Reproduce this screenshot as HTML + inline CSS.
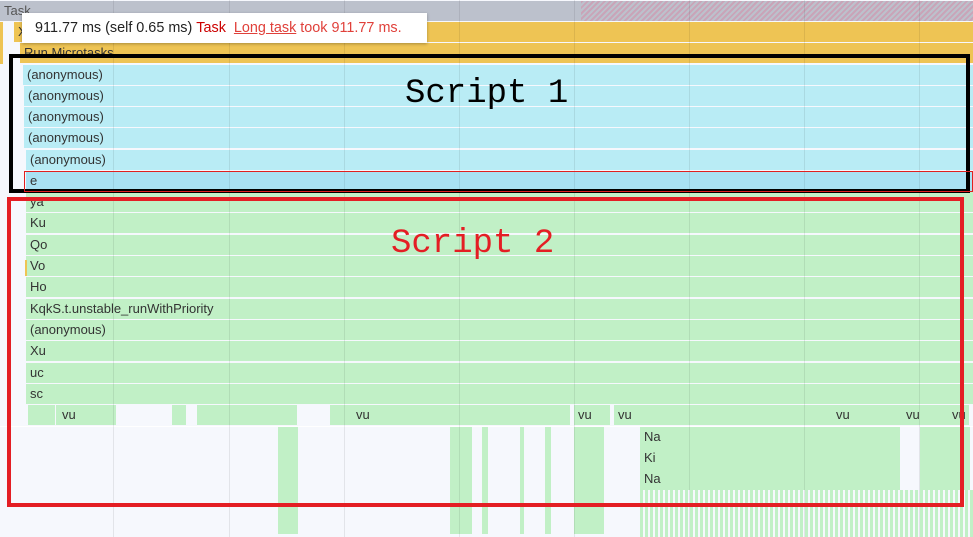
<!DOCTYPE html><html><head><style>
body{margin:0;width:973px;height:537px;overflow:hidden;background:#f6f8fd;font-family:"Liberation Sans",sans-serif;position:relative}
.r{position:absolute;height:20px;font-size:13px;color:#333;line-height:20px;padding-left:4px;box-sizing:border-box}
.g{position:absolute;top:0;bottom:0;width:1px;background:rgba(0,0,0,.08)}
.b{position:absolute;background:#c1f0c6}
</style></head><body>
<div class="r" style="top:1px;left:0;width:973px;background:#bcc1cc;color:#555">Task</div>
<div style="position:absolute;top:1px;left:581px;width:392px;height:20px;background:repeating-linear-gradient(135deg,#c9a4b8 0 2px,#bcc1cc 2px 4px)"></div>
<div class="r" style="top:22px;left:14px;width:959px;background:#eec454">X</div>
<div class="r" style="top:43px;left:20px;width:953px;background:#eec454">Run Microtasks</div>
<div style="position:absolute;left:0;top:22px;width:3px;height:42px;background:#eec454"></div>
<div class="r" style="top:65px;left:23px;width:950px;background:#b9ecf5">(anonymous)</div>
<div class="r" style="top:86px;left:24px;width:949px;background:#b9ecf5">(anonymous)</div>
<div class="r" style="top:107px;left:24px;width:949px;background:#b9ecf5">(anonymous)</div>
<div class="r" style="top:128px;left:24px;width:949px;background:#b9ecf5">(anonymous)</div>
<div class="r" style="top:150px;left:26px;width:947px;background:#b9ecf5">(anonymous)</div>
<div class="r" style="top:171px;left:26px;width:947px;background:#a9e1f3">e</div>
<div class="r" style="top:192px;left:26px;width:947px;background:#c1f0c6">ya</div>
<div class="r" style="top:213px;left:26px;width:947px;background:#c1f0c6">Ku</div>
<div class="r" style="top:235px;left:26px;width:947px;background:#c1f0c6">Qo</div>
<div class="r" style="top:256px;left:26px;width:947px;background:#c1f0c6">Vo</div>
<div class="r" style="top:277px;left:26px;width:947px;background:#c1f0c6">Ho</div>
<div class="r" style="top:299px;left:26px;width:947px;background:#c1f0c6">KqkS.t.unstable_runWithPriority</div>
<div class="r" style="top:320px;left:26px;width:947px;background:#c1f0c6">(anonymous)</div>
<div class="r" style="top:341px;left:26px;width:947px;background:#c1f0c6">Xu</div>
<div class="r" style="top:363px;left:26px;width:947px;background:#c1f0c6">uc</div>
<div class="r" style="top:384px;left:26px;width:947px;background:#c1f0c6">sc</div>
<div style="position:absolute;left:25px;top:260px;width:2px;height:16px;background:#eec454"></div>
<div class="b" style="top:405px;left:28px;width:27px;height:20px"></div>
<div class="b" style="top:405px;left:56px;width:60px;height:20px"></div>
<div class="r" style="top:405px;left:58px;width:40px">vu</div>
<div class="b" style="top:405px;left:172px;width:14px;height:20px"></div>
<div class="b" style="top:405px;left:197px;width:100px;height:20px"></div>
<div class="b" style="top:405px;left:330px;width:240px;height:20px"></div>
<div class="r" style="top:405px;left:352px;width:40px">vu</div>
<div class="b" style="top:405px;left:574px;width:36px;height:20px"></div>
<div class="r" style="top:405px;left:574px;width:30px">vu</div>
<div class="b" style="top:405px;left:614px;width:355px;height:20px"></div>
<div class="r" style="top:405px;left:614px;width:30px">vu</div>
<div class="r" style="top:405px;left:832px;width:30px">vu</div>
<div class="r" style="top:405px;left:902px;width:30px">vu</div>
<div class="r" style="top:405px;left:948px;width:30px">vu</div>
<div class="b" style="top:426px;left:278px;width:20px;height:108px"></div>
<div class="b" style="top:426px;left:450px;width:22px;height:108px"></div>
<div class="b" style="top:426px;left:574px;width:30px;height:108px"></div>
<div class="b" style="top:426px;left:640px;width:260px;height:100px"></div>
<div class="b" style="top:426px;left:920px;width:50px;height:100px"></div>
<div class="b" style="top:426px;left:482px;width:6px;height:108px"></div>
<div class="b" style="top:426px;left:520px;width:4px;height:108px"></div>
<div class="b" style="top:426px;left:545px;width:6px;height:108px"></div>
<div class="r" style="top:427px;left:640px;width:60px;background:#c1f0c6">Na</div>
<div class="r" style="top:448px;left:640px;width:60px;background:#c1f0c6">Ki</div>
<div class="r" style="top:469px;left:640px;width:60px;background:#c1f0c6">Na</div>
<div style="position:absolute;left:640px;top:490px;width:333px;height:47px;background:repeating-linear-gradient(90deg,#c1f0c6 0 3px,#f6f8fd 3px 5px)"></div>
<div style="position:absolute;left:0;top:426px;width:973px;height:1px;background:#fff"></div>
<div class="g" style="left:113px"></div><div class="g" style="left:229px"></div><div class="g" style="left:344px"></div><div class="g" style="left:459px"></div><div class="g" style="left:574px"></div><div class="g" style="left:689px"></div><div class="g" style="left:804px"></div><div class="g" style="left:919px"></div>
<div style="position:absolute;left:22px;top:13px;width:405px;height:30px;background:#fff;box-shadow:0 1px 3px rgba(0,0,0,.3);font-size:14.4px;line-height:30px;padding-left:13px;box-sizing:border-box;color:#222;white-space:nowrap">911.77 ms (self 0.65 ms)&nbsp;<span style="color:#c00">Task</span>&nbsp; <span style="color:#e0403a"><u>Long task</u> took 911.77 ms.</span></div>
<div style="position:absolute;left:9px;top:54px;width:961px;height:139px;border:4px solid #000;box-sizing:border-box"></div>
<div style="position:absolute;left:24px;top:171px;width:949px;height:21px;border:1px solid #e02020;box-sizing:border-box"></div>
<div style="position:absolute;left:7px;top:197px;width:957px;height:310px;border:4px solid #e41e24;box-sizing:border-box"></div>
<div style="position:absolute;left:405px;top:75px;font-family:'Liberation Mono',monospace;font-size:34px;color:#000">Script 1</div>
<div style="position:absolute;left:391px;top:225px;font-family:'Liberation Mono',monospace;font-size:34px;color:#e41e24">Script 2</div>
</body></html>
